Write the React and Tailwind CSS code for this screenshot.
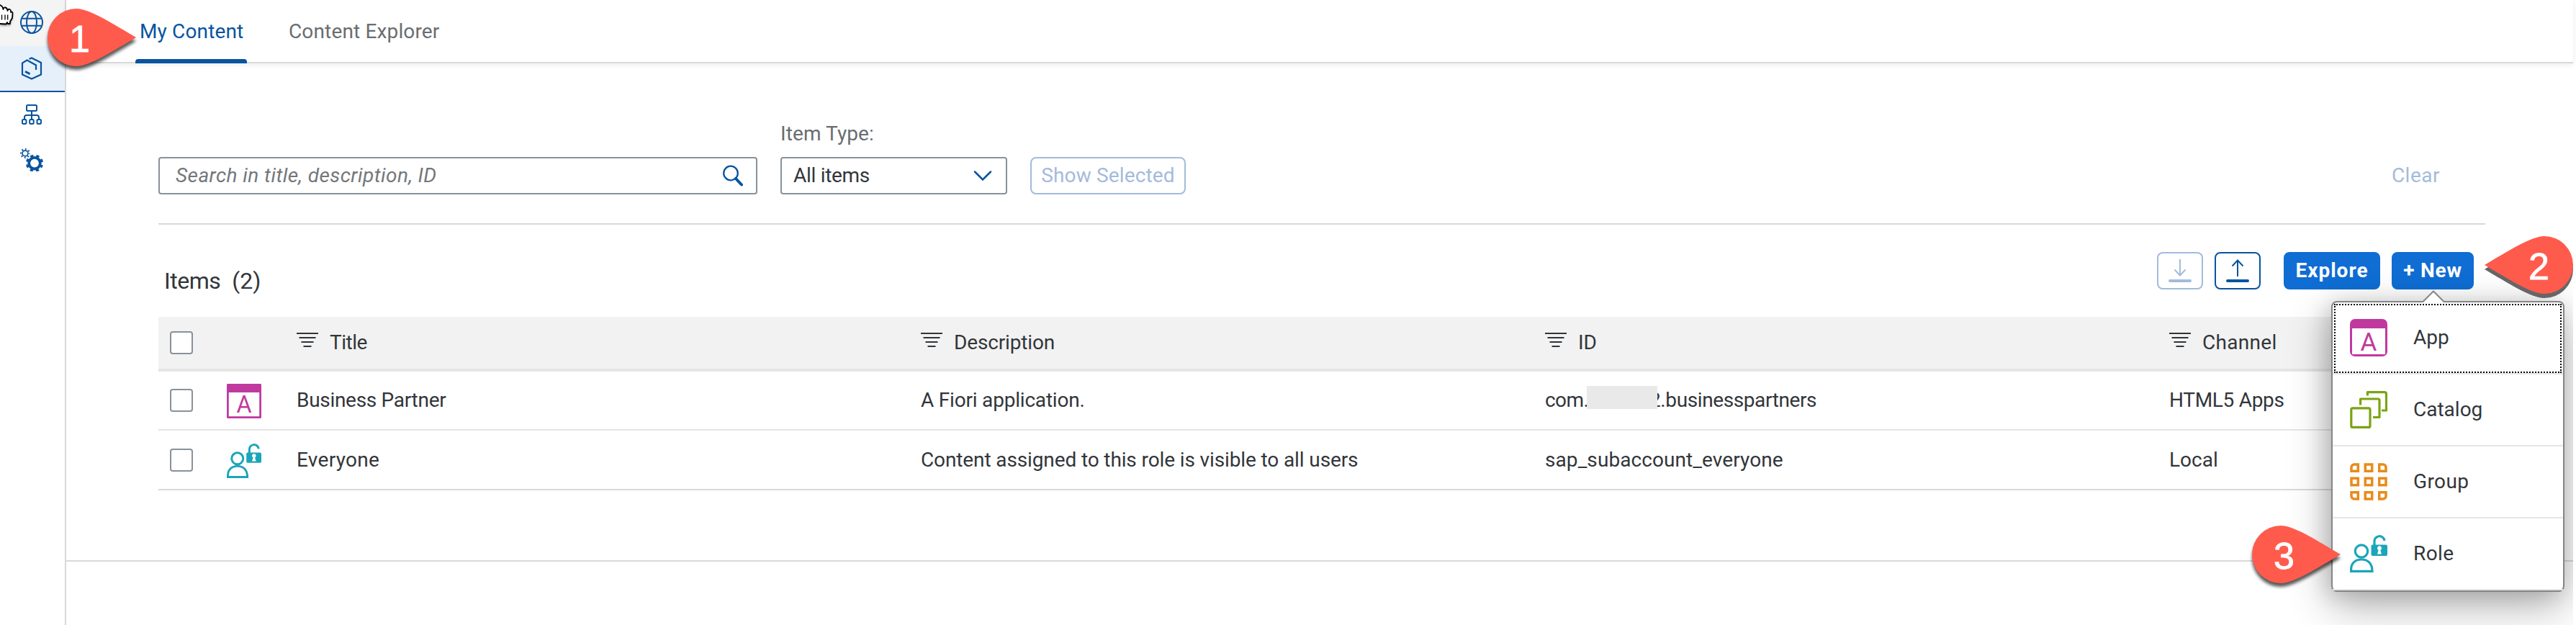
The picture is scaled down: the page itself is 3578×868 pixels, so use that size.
import React from "react";

const Globe = () => (
  <svg className="w-8 h-8" viewBox="0 0 32 32" fill="none" stroke="#0854a0" strokeWidth="2">
    <circle cx="16" cy="16" r="15" />
    <ellipse cx="16" cy="16" rx="7" ry="15" />
    <path d="M2.5 10.7h27M2.5 20.7h27" />
  </svg>
);

const Package = () => (
  <svg className="w-8 h-8" viewBox="28 79 32 32" fill="none" stroke="#0854a0" strokeWidth="2.2">
    <path d="M40.5 82l3.5-1.6L57 87v16.600L44 109.600 31 103.600V87.500l6.500-4 12.500 7V97" />
    <path d="M35 99.300l6.500 3.500" strokeWidth="3" />
  </svg>
);

const OrgChart = () => (
  <svg className="w-8 h-8" viewBox="28 143 32 32" fill="none" stroke="#0854a0" strokeWidth="2">
    <rect x="37" y="146" width="14" height="8" rx="1.500" />
    <path d="M44 154v11M34 166v-3a3 3 0 0 1 3-3h14a3 3 0 0 1 3 3v3" />
    <rect x="31" y="166" width="5.500" height="6" rx="1.500" />
    <rect x="41.200" y="166" width="5.500" height="6" rx="1.500" />
    <rect x="51.500" y="166" width="5.500" height="6" rx="1.500" />
  </svg>
);

const Gears = () => (
  <svg className="w-8 h-8" viewBox="28 207 32 32" fill="none" stroke="#0854a0">
    <circle cx="35" cy="214" r="3.900" strokeWidth="1.700" />
    <circle cx="35" cy="214" r="5.800" strokeWidth="2.600" strokeDasharray="1.600 2.955" strokeDashoffset="0.800" />
    <circle cx="48" cy="227.700" r="7.800" strokeWidth="3.800" />
    <circle cx="48" cy="227.700" r="10.400" strokeWidth="3.400" strokeDasharray="4.300 3.868" strokeDashoffset="2.150" transform="rotate(22.500 48 227.700)" />
  </svg>
);

const HandCursor = () => (
  <svg className="absolute left-0 top-1 w-5 h-8 drop-shadow-[0_2px_1px_rgba(0,0,0,0.3)]" viewBox="0 4 20 32" fill="#fff" stroke="#000" strokeWidth="1.800" strokeLinejoin="round">
    <path d="M-2 6L1 7.500Q4 9 4.500 13Q5 10 7.500 10.500Q10 11 10.500 15Q11.500 12 13.500 13Q15.500 13.500 15 17Q17.500 15.500 17.500 19L17 25L14 30V33H11L10 31L8.500 33.500L0 33H-2" />
    <path d="M2.500 20.500v7M7 20.500v7M10.700 20.500v7" strokeWidth="1.300" />
  </svg>
);

const SearchIcon = () => (
  <svg className="w-8 h-8" viewBox="0 0 32 32" fill="none" stroke="#0854a0" strokeLinecap="round">
    <circle cx="13" cy="12.500" r="9.800" strokeWidth="2.300" />
    <path d="M20 20l8 8.500" strokeWidth="4" />
  </svg>
);

const Chevron = () => (
  <svg className="w-7 h-4" viewBox="0 0 28 16" fill="none" stroke="#0854a0" strokeWidth="2.500" strokeLinecap="round">
    <path d="M3 2.500l11 11 11-11" />
  </svg>
);

const FilterIcon = () => (
  <svg className="w-[30px] h-5 mt-[-8px]" viewBox="0 0 30 20" fill="none" stroke="#32363a" strokeWidth="2">
    <path d="M0 1h30M3.500 7h23M6.500 13h17M9.500 19h11" />
  </svg>
);

const Transfer = ({ up }) => (
  <svg className="w-8 h-8" viewBox="0 0 32 32" fill="none" stroke="currentColor">
    <path d={up ? "M16 24V1M8.500 9.500L16 1.500l7.500 8" : "M16 0v23M8.500 14.500l7.500 8 7.500-8"} strokeWidth="2" />
    <path d="M2 30h28" strokeWidth="4" strokeLinecap="round" />
  </svg>
);

const AppIcon = ({ className, round }) => (
  <svg className={className} viewBox="0 0 52 52">
    <rect width="52" height="52" rx={round ? 7 : 1.5} fill="#c0399f" />
    <rect x="3" y="13" width="46" height="36" fill="#fff" />
    <text x="26" y="43.500" textAnchor="middle" fontFamily="Roboto, sans-serif" fontSize="35" fill="#c0399f">A</text>
  </svg>
);

const CatalogIcon = () => (
  <svg className="w-[52px] h-[52px]" viewBox="0 0 52 52" fill="none" stroke="#7ca315" strokeWidth="3.200" strokeLinejoin="round">
    <rect x="1.800" y="23.800" width="26.200" height="26.600" rx="2" />
    <path d="M14.600 19.500V11H39a2 2 0 0 1 2 2v23.500h-9M24.400 6.500V1.700H48a2.500 2.500 0 0 1 2.500 2.500V27h-6.500" />
  </svg>
);

const GroupIcon = () => (
  <svg className="w-[52px] h-[52px]" viewBox="0 0 52 52" fill="none" stroke="#e78c1a" strokeWidth="3.500">
    <path d="M11.300 11.300H2V6a4 4 0 0 1 4-4h5.300zM21.300 2h9.400v9.300h-9.400zM40.700 11.300H50V6a4 4 0 0 0-4-4h-5.300z" />
    <path d="M2 21.300h9.300v9.400H2zM21.300 21.300h9.400v9.400h-9.400zM40.700 21.300H50v9.400h-9.300z" />
    <path d="M11.300 40.700H2V46a4 4 0 0 0 4 4h5.300zM21.300 40.700h9.400V50h-9.400zM40.700 40.700H50V46a4 4 0 0 1-4 4h-5.300z" />
  </svg>
);

const RoleIcon = ({ className }) => (
  <svg className={className} viewBox="0 0 52 52" fill="none" stroke="#1ba5b8" strokeWidth="3.200">
    <circle cx="16" cy="22.500" r="8.700" />
    <path d="M1.600 50.400V48C1.600 39 7.500 34 16 34s15 5 15 16.400z" />
    <path d="M34 15V9.500a7 7 0 0 1 14-1.500" />
    <rect x="29.500" y="13.500" width="22.500" height="15.500" rx="2" fill="#1ba5b8" stroke="none" />
    <path d="M38 26.500l1.600-5.500a3 3 0 1 1 2.800 0l1.600 5.500z" fill="#fff" stroke="none" />
  </svg>
);

const Pin = ({ className, n, flip, hard, tx }) => (
  <svg className={className} viewBox="0 0 124 80" overflow="visible">
    <g transform={flip ? "translate(122 0) scale(-1 1)" : undefined}>
      <path
        className={hard ? "drop-shadow-[0_6px_0px_#666]" : "drop-shadow-[0_5px_2px_rgba(0,0,0,0.65)]"}
        d="M123 40C92 58 59 80 40 80A40 40 0 0 1 40 0C59 0 92 22 123 40Z"
        fill="#ff5b4d"
      />
    </g>
    <text x={tx} y="60" fontFamily="'Liberation Sans', sans-serif" fontSize="52" fill="#fff" stroke="#fff" strokeWidth="0.800">{n}</text>
  </svg>
);

const Checkbox = () => <span className="ml-4 h-8 w-8 rounded-[4px] border-2 border-[#89919a] bg-white" />;

const HeaderCell = ({ children, className }) => (
  <div className="flex items-center gap-4 pl-px">
    <FilterIcon />
    <span className={className}>{children}</span>
  </div>
);

const GRID = "grid grid-cols-[95px_96px_867px_867px_867px_1fr] items-center";

const MENU = [
  { label: "App", icon: <AppIcon round className="w-[52px] h-[52px]" />, ls: "" },
  { label: "Catalog", icon: <CatalogIcon />, ls: "" },
  { label: "Group", icon: <GroupIcon />, ls: "tracking-[0.4px]" },
  { label: "Role", icon: <RoleIcon className="w-[52px] h-[52px]" />, ls: "tracking-[0.4px]" },
];

export default function App() {
  return (
    <div className="relative flex h-[868px] w-[3578px] overflow-hidden bg-white font-['Roboto',sans-serif] text-[28px] leading-[36px] text-[#32363a]">
      <nav className="flex w-[92px] shrink-0 flex-col border-r-2 border-[#d9d9d9]">
        <div className="flex h-16 items-center bg-[#f4f4f4] pb-0.5 pl-7"><Globe /></div>
        <div className="flex h-16 items-center border-b-2 border-[#0854a0] bg-[#e5f0fa] pl-7"><Package /></div>
        <div className="flex h-16 items-center pl-7 pb-0.5"><OrgChart /></div>
        <div className="flex h-16 items-center pl-7 pb-1"><Gears /></div>
      </nav>

      <main className="flex h-full w-[3482px] flex-col">
        <header className="flex h-[88px] shrink-0 gap-[58px] border-b-2 border-[#d9d9d9] pl-24 shadow-[0_2px_8px_rgba(0,0,0,0.08)]">
          <div className="flex h-[88px] w-[155px] flex-col justify-between">
            <span className="pl-1.5 pt-[26px] tracking-[0.15px] whitespace-nowrap text-[#0854a0]">My Content</span>
            <span className="h-1.5 rounded-t-[4px] bg-[#0854a0]" />
          </div>
          <span className="pt-[26px] tracking-[0.15px] text-[#6a6d70]">Content Explorer</span>
        </header>

        <section className="flex h-[692px] shrink-0 flex-col border-b-2 border-[#d9d9d9] pl-32 pr-[122px] pt-[81px]">
          <div className="mb-[-2px] flex h-[143px] items-end border-b-2 border-[#d9d9d9] pb-10">
            <div className="flex h-[52px] w-[832px] items-center justify-between rounded-[4px] border-2 border-[#89919a] pl-[22px] pr-4">
              <span className="italic tracking-[0.43px] text-[#74777a]">Search in title, description, ID</span>
              <SearchIcon />
            </div>
            <div className="ml-8 flex flex-col">
              <span className="mb-[14px] tracking-[0.1px] text-[#6a6d70]">Item Type:</span>
              <div className="flex h-[52px] w-[315px] items-center justify-between rounded-[4px] border-2 border-[#89919a] pl-4 pr-[18px]">
                <span className="tracking-[-0.3px]">All items</span>
                <Chevron />
              </div>
            </div>
            <button className="ml-8 h-[52px] w-[216px] rounded-[8px] border-2 border-[#a3bbdb] tracking-[0.15px] text-[#a3bbdb]">Show Selected</button>
            <span className="mb-2 ml-auto mr-[63px] tracking-[0.5px] text-[#a3bbdb]">Clear</span>
          </div>

          <div className="flex h-[131px] shrink-0 justify-between pt-10">
            <h2 className="flex gap-4 pl-2 pt-5 text-[32px] leading-[40px]">
              <span className="tracking-[-0.5px]">Items</span>
              <span>(2)</span>
            </h2>
            <div className="flex h-[52px] gap-4 pr-4">
              <button className="flex w-16 items-center justify-center rounded-[8px] border-2 border-[#a3bbdb] text-[#a3bbdb]"><Transfer /></button>
              <button className="mr-4 flex w-16 items-center justify-center rounded-[8px] border-2 border-[#0854a0] text-[#0854a0]"><Transfer up /></button>
              <button className="w-[134px] rounded-[8px] bg-[#0f6dd3] font-bold tracking-[1px] text-white">Explore</button>
              <button className="w-[114px] rounded-[8px] bg-[#0f6dd3] font-bold tracking-[0.8px] text-white">+ New</button>
            </div>
          </div>

          <div className={`${GRID} mt-[-1px] h-[76px] shrink-0 border-b-4 border-[#e5e5e5] bg-[#f2f2f2]`}>
            <Checkbox />
            <span />
            <HeaderCell className="tracking-[-0.5px]">Title</HeaderCell>
            <HeaderCell className="tracking-[-0.15px]">Description</HeaderCell>
            <HeaderCell>ID</HeaderCell>
            <HeaderCell className="tracking-[0.3px]">Channel</HeaderCell>
          </div>
          <div className={`${GRID} h-[82px] shrink-0 border-b-2 border-[#e5e5e5]`}>
            <Checkbox />
            <AppIcon className="mt-0.5 h-12 w-12" />
            <span className="pl-px tracking-[-0.3px]">Business Partner</span>
            <span className="pl-px tracking-[-0.2px]">A Fiori application.</span>
            <div className="flex pl-px">
              <span className="w-[58px] tracking-[-0.6px]">com.</span>
              <span className="z-10 mt-[-2px] h-8 w-[98px] bg-[#e9e9e9]" />
              <span className="-ml-[11px] tracking-[-0.4px]">2.businesspartners</span>
            </div>
            <span className="pl-px tracking-[-0.3px]">HTML5 Apps</span>
          </div>
          <div className={`${GRID} h-[83px] shrink-0 border-b-2 border-[#d9d9d9]`}>
            <Checkbox />
            <RoleIcon className="mt-0.5 h-12 w-12" />
            <span className="pl-px tracking-[0.3px]">Everyone</span>
            <span className="pl-px tracking-[-0.12px]">Content assigned to this role is visible to all users</span>
            <span className="pl-px tracking-[0.08px]">sap_subaccount_everyone</span>
            <span className="pl-px">Local</span>
          </div>
        </section>
      </main>

      <div className="absolute left-0 top-0 h-[868px] w-[3574px] overflow-hidden">
        <div className="absolute left-[3238px] top-[418px] flex h-[404px] w-[324px] flex-col rounded-[8px] border-2 border-[#858585] bg-white shadow-[0_20px_60px_rgba(0,0,0,0.3),-6px_4px_30px_rgba(0,0,0,0.15)]">
          {MENU.map((m, i) => (
            <div key={m.label} className="relative flex h-[100px] items-center border-b-2 border-[#e5e5e5] pl-6">
              {i === 0 && <span className="absolute left-[2px] right-[2px] top-[2px] bottom-0 border-2 border-dotted border-black" />}
              {m.icon}
              <span className={`pl-9 ${m.ls}`}>{m.label}</span>
            </div>
          ))}
          <svg className="absolute left-[124px] top-[-17px] h-[18px] w-8" viewBox="0 0 32 18">
            <path d="M0 18L16 1.500L32 18Z" fill="#fff" />
            <path d="M1 16.500L16 1.500L31 16.500" fill="none" stroke="#858585" strokeWidth="2" />
          </svg>
        </div>
      </div>

      <HandCursor />
      <Pin n="1" tx="30" className="absolute left-[66px] top-3 h-20 w-[124px] overflow-visible" />
      <Pin n="2" tx="60" flip hard className="absolute left-[3452px] top-[328px] h-20 w-[124px] overflow-visible" />
      <Pin n="3" tx="30" className="absolute left-[3128px] top-[730px] h-20 w-[124px] overflow-visible" />
    </div>
  );
}
